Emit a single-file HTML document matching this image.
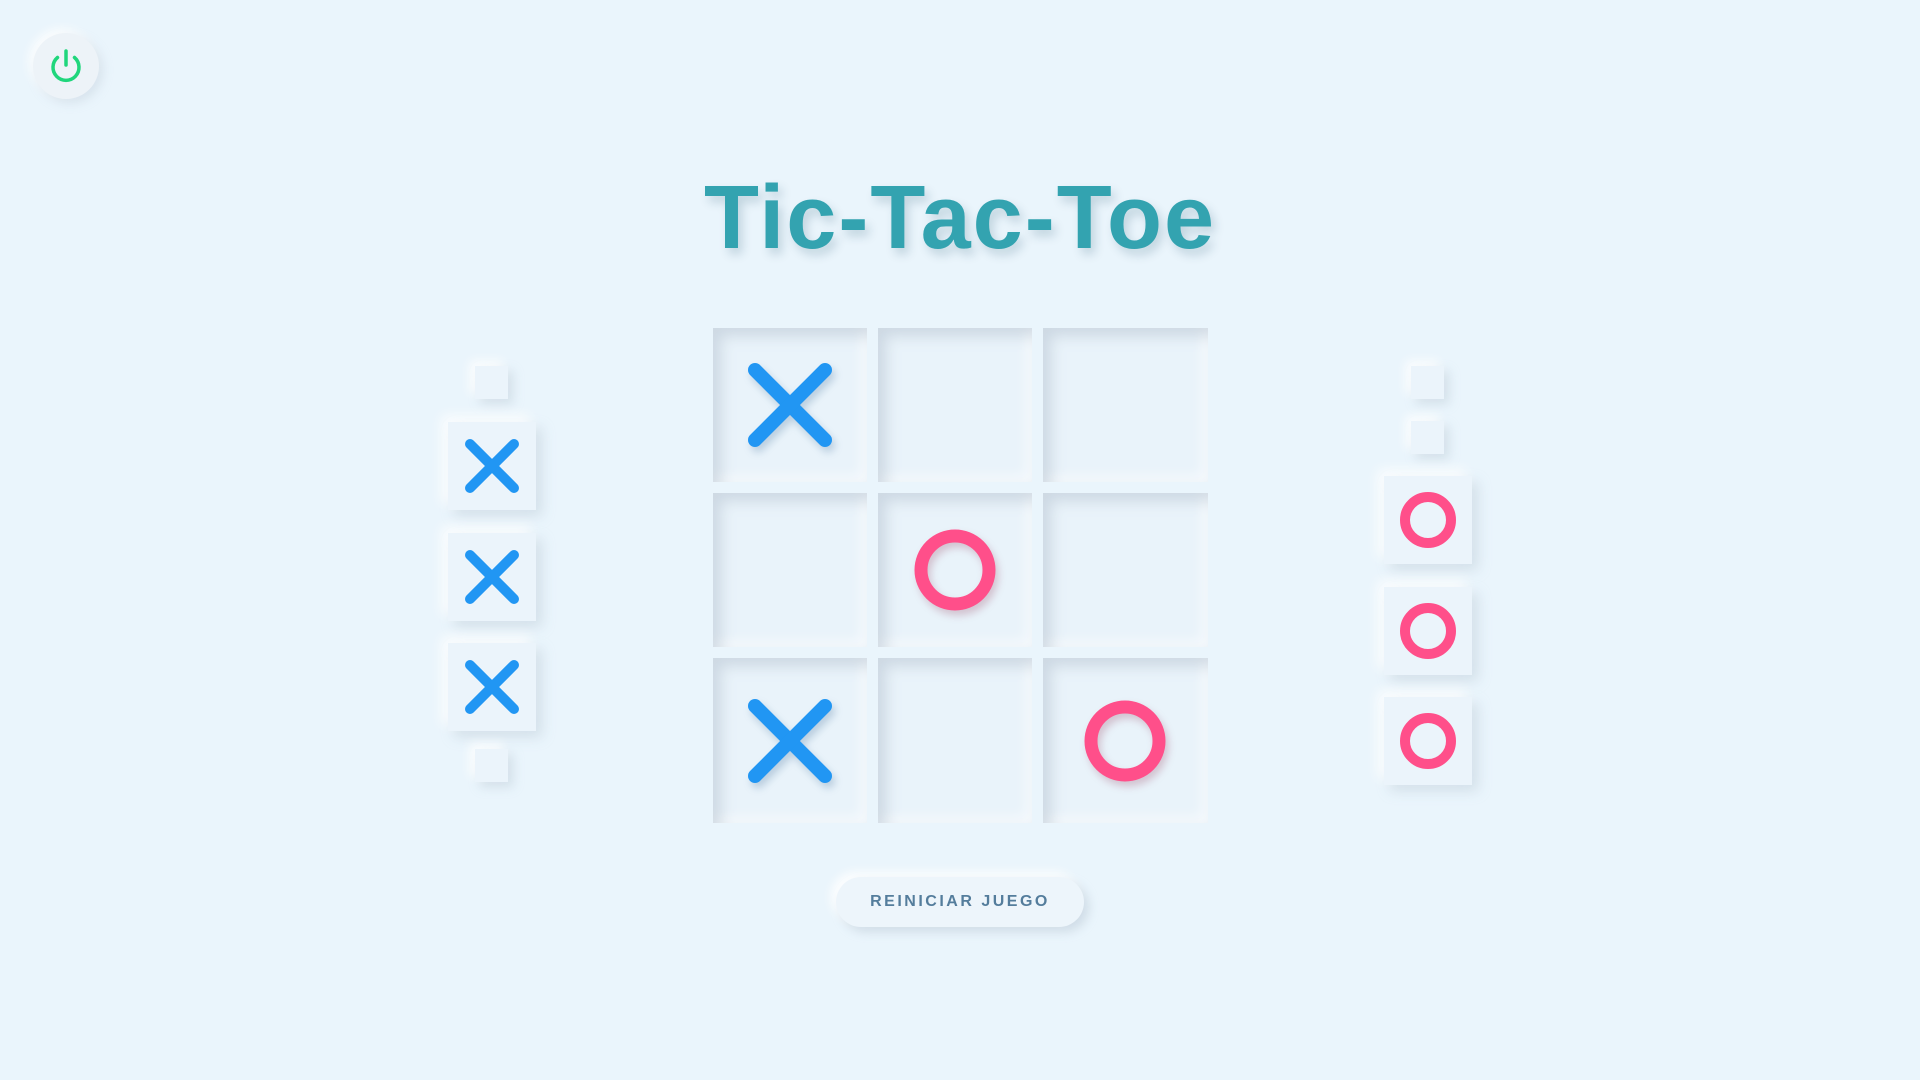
<!DOCTYPE html>
<html><head><style>
html,body{margin:0;padding:0}
body{width:1920px;height:1080px;background:#eaf5fc;position:relative;overflow:hidden;font-family:"Liberation Sans",sans-serif}
.pw{position:absolute;left:33px;top:33px;width:66px;height:66px;border-radius:50%;background:#edf3f8;box-shadow:4px 4px 10px rgba(180,195,210,.35),-4px -4px 10px rgba(255,255,255,.9)}
h1{position:absolute;left:0;width:1920px;top:167px;margin:0;text-align:center;font-size:90px;font-weight:bold;color:#33a3b0;letter-spacing:2px;text-shadow:4px 6px 10px rgba(0,60,90,.18)}
.cell{position:absolute;width:154px;height:154px;background:#e9f3fa;box-shadow:inset 8px 8px 14px rgba(170,185,200,.45),inset -6px -6px 12px rgba(255,255,255,.6)}
.w{width:165px}.h{height:165px}
.box{position:absolute;width:88px;height:88px;background:#ebf4fb;box-shadow:6px 6px 12px rgba(170,185,200,.35),-6px -6px 12px rgba(255,255,255,.9)}
.sq{position:absolute;width:33px;height:33px;background:#ebf4fb;box-shadow:5px 5px 10px rgba(170,185,200,.35),-5px -5px 10px rgba(255,255,255,.9)}
svg{position:absolute;left:0;top:0;overflow:visible}
.btn{position:absolute;left:836px;top:877px;width:248px;height:50px;border-radius:25px;background:#edf5fb;box-shadow:5px 5px 10px rgba(170,185,200,.4),-5px -5px 10px rgba(255,255,255,.9);text-align:center;line-height:50px;font-size:16px;font-weight:bold;letter-spacing:2.5px;color:#547d9c}
</style></head><body>
<div class="pw"><svg width="66" height="66" viewBox="0 0 66 66"><path d="M24.5 24.5 A13 13 0 1 0 41.5 24.5" fill="none" stroke="#1fd67c" stroke-width="3.5" stroke-linecap="round"/><line x1="33" y1="18" x2="33" y2="32" stroke="#1fd67c" stroke-width="3.5" stroke-linecap="round"/></svg></div>
<h1>Tic-Tac-Toe</h1>

<div class="cell" style="left:713px;top:328px"><svg width="154" height="154"><g stroke="#2196f3" stroke-width="14" stroke-linecap="round" style="filter:drop-shadow(3px 5px 4px rgba(0,60,120,.2))"><line x1="42" y1="42" x2="112" y2="112"/><line x1="112" y1="42" x2="42" y2="112"/></g></svg></div>
<div class="cell" style="left:878px;top:328px"></div>
<div class="cell w" style="left:1043px;top:328px"></div>
<div class="cell" style="left:713px;top:493px"></div>
<div class="cell" style="left:878px;top:493px"><svg width="154" height="154"><circle cx="77" cy="77" r="34" fill="none" stroke="#ff4f8a" stroke-width="13" style="filter:drop-shadow(3px 5px 4px rgba(120,0,40,.2))"/></svg></div>
<div class="cell w" style="left:1043px;top:493px"></div>
<div class="cell h" style="left:713px;top:658px"><svg width="154" height="165"><g stroke="#2196f3" stroke-width="14" stroke-linecap="round" style="filter:drop-shadow(3px 5px 4px rgba(0,60,120,.2))"><line x1="42" y1="48" x2="112" y2="118"/><line x1="112" y1="48" x2="42" y2="118"/></g></svg></div>
<div class="cell h" style="left:878px;top:658px"></div>
<div class="cell w h" style="left:1043px;top:658px"><svg width="165" height="165"><circle cx="82" cy="83" r="34" fill="none" stroke="#ff4f8a" stroke-width="13" style="filter:drop-shadow(3px 5px 4px rgba(120,0,40,.2))"/></svg></div>

<div class="sq" style="left:475px;top:366px"></div>
<div class="box" style="left:448px;top:422px"><svg width="88" height="88"><g stroke="#2196f3" stroke-width="10" stroke-linecap="round"><line x1="22" y1="22" x2="66" y2="66"/><line x1="66" y1="22" x2="22" y2="66"/></g></svg></div>
<div class="box" style="left:448px;top:533px"><svg width="88" height="88"><g stroke="#2196f3" stroke-width="10" stroke-linecap="round"><line x1="22" y1="22" x2="66" y2="66"/><line x1="66" y1="22" x2="22" y2="66"/></g></svg></div>
<div class="box" style="left:448px;top:643px"><svg width="88" height="88"><g stroke="#2196f3" stroke-width="10" stroke-linecap="round"><line x1="22" y1="22" x2="66" y2="66"/><line x1="66" y1="22" x2="22" y2="66"/></g></svg></div>
<div class="sq" style="left:475px;top:749px"></div>

<div class="sq" style="left:1411px;top:366px"></div>
<div class="sq" style="left:1411px;top:421px"></div>
<div class="box" style="left:1384px;top:476px"><svg width="88" height="88"><circle cx="44" cy="44" r="23" fill="none" stroke="#ff4f8a" stroke-width="10"/></svg></div>
<div class="box" style="left:1384px;top:587px"><svg width="88" height="88"><circle cx="44" cy="44" r="23" fill="none" stroke="#ff4f8a" stroke-width="10"/></svg></div>
<div class="box" style="left:1384px;top:697px"><svg width="88" height="88"><circle cx="44" cy="44" r="23" fill="none" stroke="#ff4f8a" stroke-width="10"/></svg></div>

<div class="btn">REINICIAR JUEGO</div>
</body></html>
